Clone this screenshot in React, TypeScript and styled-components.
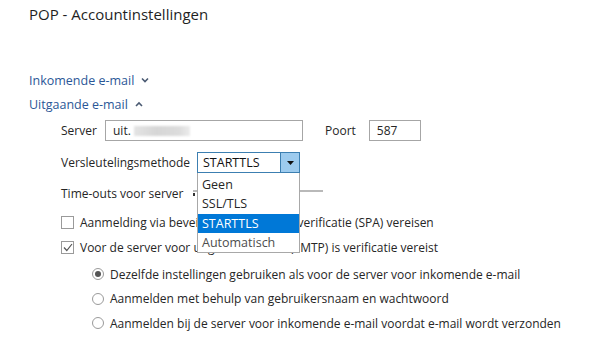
import styled, { createGlobalStyle } from "styled-components";

const GlobalStyle = createGlobalStyle`
  html, body {
    margin: 0;
    padding: 0;
    background: #ffffff;
  }
  body {
    font-family: "Open Sans", "Noto Sans", sans-serif;
    font-size: 12px;
    color: #262626;
  }
`;

const Page = styled.div`
  width: 591px;
  height: 337px;
  padding-left: 29px;
  box-sizing: border-box;
  overflow: hidden;
  display: flex;
  flex-direction: column;
`;

const Title = styled.h1`
  margin: 4px 0 0 0;
  font-size: 15px;
  font-weight: 400;
  line-height: 20px;
  color: #1f1f1f;
`;

const SectionHeader = styled.div<{ $mt?: number }>`
  display: flex;
  align-items: center;
  gap: 7px;
  height: 24px;
  margin-top: ${(p) => p.$mt ?? 0}px;
  color: #2b5797;
  font-size: 12.5px;
`;

const Form = styled.div`
  display: flex;
  flex-direction: column;
  padding-left: 32px;
`;

const Row = styled.div<{ $mt: number; $h?: number }>`
  display: flex;
  align-items: center;
  height: ${(p) => p.$h ?? 21}px;
  margin-top: ${(p) => p.$mt}px;
`;

const Label = styled.span<{ $w?: number }>`
  width: ${(p) => (p.$w ? `${p.$w}px` : "auto")};
  flex-shrink: 0;
`;

const TextInput = styled.div<{ $w: number }>`
  width: ${(p) => p.$w}px;
  height: 21px;
  box-sizing: border-box;
  border: 1px solid #a6a6a6;
  display: flex;
  align-items: center;
  padding-left: 7px;
  gap: 3px;
`;

const Blurred = styled.span`
  display: inline-block;
  width: 56px;
  height: 10px;
  background: linear-gradient(90deg, #e4e4e4, #d6d6d6 40%, #dcdcdc 80%, #ececec);
  filter: blur(1px);
`;

const PortLabel = styled.span`
  margin-left: 22px;
  margin-right: 13px;
`;

const SelectWrap = styled.div`
  position: relative;
  width: 103px;
  height: 21px;
`;

const SelectBox = styled.div`
  display: flex;
  height: 21px;
  box-sizing: border-box;
  border: 1px solid #3c7fb1;
`;

const SelectValue = styled.div`
  flex: 1;
  display: flex;
  align-items: center;
  padding-left: 5px;
  color: #111;
  font-size: 12.5px;
`;

const ArrowButton = styled.div`
  width: 18px;
  background: #9dcbee;
  border-left: 1px solid #3c7fb1;
  display: flex;
  align-items: center;
  justify-content: center;
`;

const DropList = styled.div`
  position: absolute;
  top: 21px;
  left: 0;
  width: 103px;
  height: 80px;
  box-sizing: border-box;
  border: 1px solid #a8a8a8;
  border-top: none;
  background: #ffffff;
  display: flex;
  flex-direction: column;
  padding-top: 2px;
  z-index: 2;
`;

const DropItem = styled.div<{ $selected?: boolean; $muted?: boolean }>`
  height: 19.5px;
  display: flex;
  align-items: center;
  padding-left: 4px;
  font-size: 12.5px;
  background: ${(p) => (p.$selected ? "#0078d7" : "transparent")};
  color: ${(p) => (p.$selected ? "#ffffff" : p.$muted ? "#4d4d4d" : "#262626")};
`;

const SliderTrack = styled.div`
  position: relative;
  width: 130px;
  height: 2px;
  margin-left: 1px;
  margin-top: -4px;
  background: #b9b9b9;
`;

const SliderTick = styled.div`
  position: absolute;
  left: 0;
  top: 3px;
  width: 2px;
  height: 3px;
  background: #333;
`;

const CheckRow = styled(Row)`
  gap: 6px;
`;

const CheckBox = styled.div`
  width: 13px;
  height: 13px;
  box-sizing: border-box;
  border: 1px solid #9a9a9a;
  background: #fff;
  display: flex;
  align-items: center;
  justify-content: center;
`;

const RadioGroup = styled.div`
  display: flex;
  flex-direction: column;
  padding-left: 31px;
  margin-top: 5px;
`;

const RadioRow = styled.div`
  display: flex;
  align-items: center;
  gap: 6px;
  height: 24.5px;
`;

const Radio = styled.div<{ $on?: boolean }>`
  width: 12px;
  height: 12px;
  box-sizing: border-box;
  border-radius: 50%;
  border: 1px solid #9a9a9a;
  display: flex;
  align-items: center;
  justify-content: center;
  &::after {
    content: "";
    width: 6px;
    height: 6px;
    border-radius: 50%;
    background: ${(p) => (p.$on ? "#555" : "transparent")};
  }
`;

const Chevron = ({ up }: { up?: boolean }) => (
  <svg width="8" height="6" viewBox="0 0 8 6">
    <polyline
      points={up ? "1,5 4,2 7,5" : "1,1.5 4,4.5 7,1.5"}
      fill="none"
      stroke="#4a5a72"
      strokeWidth="1.6"
    />
  </svg>
);

const options = ["Geen", "SSL/TLS", "STARTTLS", "Automatisch"];

const radios = [
  "Dezelfde instellingen gebruiken als voor de server voor inkomende e-mail",
  "Aanmelden met behulp van gebruikersnaam en wachtwoord",
  "Aanmelden bij de server voor inkomende e-mail voordat e-mail wordt verzonden",
];

export default function App() {
  return (
    <>
      <GlobalStyle />
      <Page>
        <Title>POP - Accountinstellingen</Title>
        <SectionHeader $mt={44}>
          Inkomende e-mail <Chevron />
        </SectionHeader>
        <SectionHeader>
          Uitgaande e-mail <Chevron up />
        </SectionHeader>
        <Form>
          <Row $mt={4}>
            <Label $w={44}>Server</Label>
            <TextInput $w={198}>
              uit.<Blurred />
            </TextInput>
            <PortLabel>Poort</PortLabel>
            <TextInput $w={52}>587</TextInput>
          </Row>
          <Row $mt={11}>
            <Label $w={136}>Versleutelingsmethode</Label>
            <SelectWrap>
              <SelectBox>
                <SelectValue>STARTTLS</SelectValue>
                <ArrowButton>
                  <svg width="7" height="4" viewBox="0 0 7 4">
                    <polygon points="0,0 7,0 3.5,4" fill="#111" />
                  </svg>
                </ArrowButton>
              </SelectBox>
              <DropList>
                {options.map((o) => (
                  <DropItem
                    key={o}
                    $selected={o === "STARTTLS"}
                    $muted={o === "Automatisch"}
                  >
                    {o}
                  </DropItem>
                ))}
              </DropList>
            </SelectWrap>
          </Row>
          <Row $mt={10} $h={20}>
            <Label $w={131}>Time-outs voor server</Label>
            <SliderTrack>
              <SliderTick />
            </SliderTrack>
          </Row>
          <CheckRow $mt={9} $h={20}>
            <CheckBox />
            <span>Aanmelding via beveiligde wachtwoordverificatie (SPA) vereisen</span>
          </CheckRow>
          <CheckRow $mt={5} $h={20}>
            <CheckBox>
              <svg width="10" height="9" viewBox="0 0 10 9">
                <polyline
                  points="1,4.5 3.8,7.5 9,1"
                  fill="none"
                  stroke="#555"
                  strokeWidth="1.2"
                />
              </svg>
            </CheckBox>
            <span>Voor de server voor uitgaande e-mail (SMTP) is verificatie vereist</span>
          </CheckRow>
          <RadioGroup>
            {radios.map((r, i) => (
              <RadioRow key={r}>
                <Radio $on={i === 0} />
                <span>{r}</span>
              </RadioRow>
            ))}
          </RadioGroup>
        </Form>
      </Page>
    </>
  );
}
